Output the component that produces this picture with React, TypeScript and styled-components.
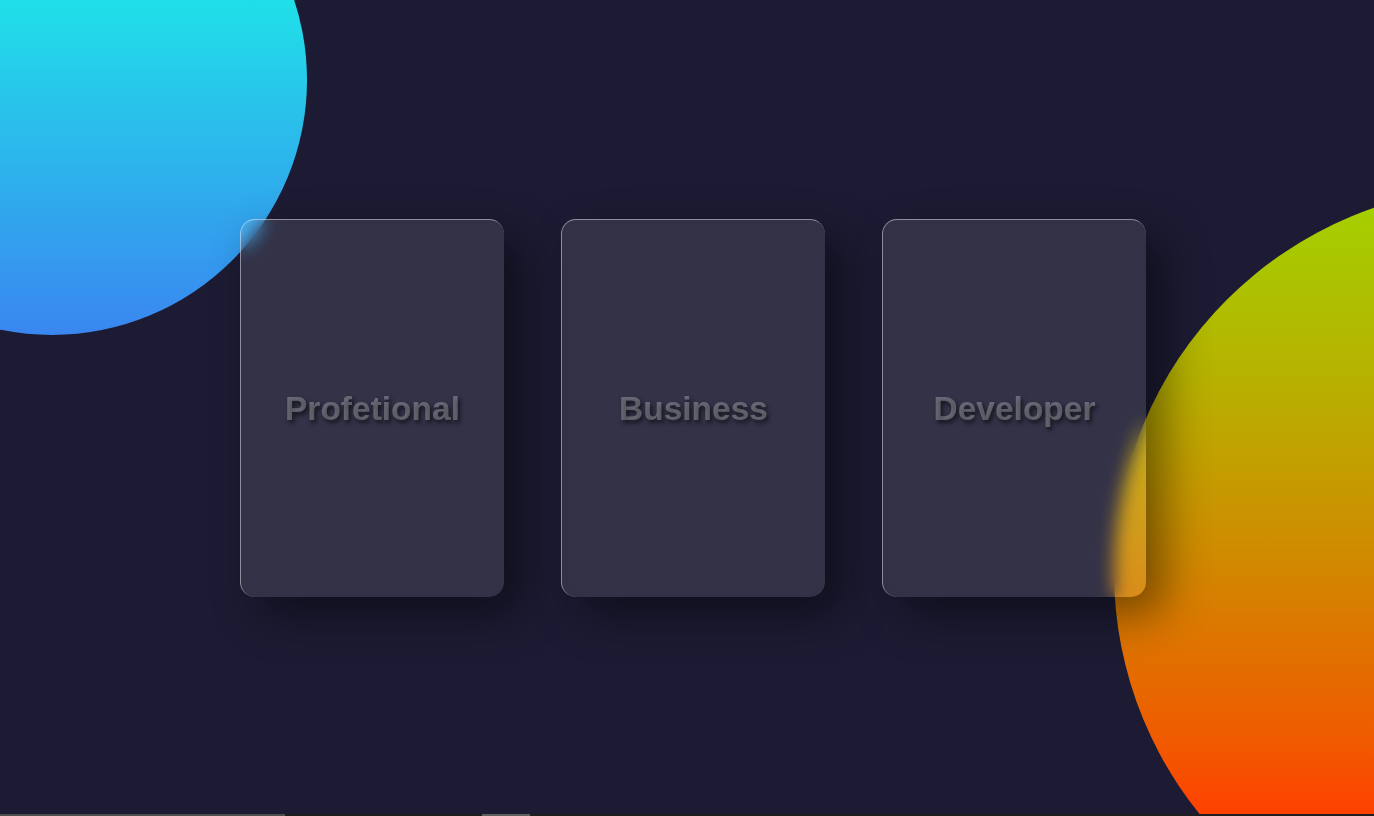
import React from "react";
import styled, { createGlobalStyle } from "styled-components";

const GlobalStyle = createGlobalStyle`
  * { box-sizing: border-box; }
  html, body { margin: 0; padding: 0; overflow: hidden; }
  body {
    background: #1c1b33;
    font-family: "Liberation Sans", Arial, sans-serif;
  }
`;

const Page = styled.div`
  height: 100vh;
  display: flex;
  flex-direction: column;
`;

const Stage = styled.main`
  position: relative;
  flex: 1;
  display: flex;
  align-items: center;
  justify-content: center;
  gap: 57px;
  padding-left: 12px;
  padding-top: 2px;
  overflow: hidden;
  background: #1c1b33;

  &::before {
    content: "";
    position: absolute;
    left: -203px;
    top: -175px;
    width: 510px;
    height: 510px;
    border-radius: 50%;
    background: linear-gradient(#12f6e6 0%, #20e0e8 34%, #3a86f0 100%);
  }

  &::after {
    content: "";
    position: absolute;
    left: 1114px;
    top: 187px;
    width: 770px;
    height: 770px;
    border-radius: 50%;
    background: linear-gradient(#a2d300 0%, #b7b100 25%, #d08a00 48%, #f05a00 72%, #ff3f00 82%, #ff3300 100%);
  }
`;

const Card = styled.div`
  position: relative;
  z-index: 1;
  width: 264px;
  height: 378px;
  border-radius: 15px;
  background: rgba(255, 255, 255, 0.1);
  border-top: 1px solid rgba(255, 255, 255, 0.45);
  border-left: 1px solid rgba(255, 255, 255, 0.45);
  box-shadow: 18px 18px 45px rgba(0, 0, 0, 0.45);
  backdrop-filter: blur(9px);
  -webkit-backdrop-filter: blur(9px);
  display: flex;
  align-items: center;
  justify-content: center;
`;

const Title = styled.h2`
  margin: 0;
  font-family: "Liberation Sans", Arial, sans-serif;
  font-weight: 700;
  font-size: 33.5px;
  color: rgba(255, 255, 255, 0.28);
  text-shadow: 2px 3px 4px rgba(0, 0, 0, 0.6);
`;

const ScrollStrip = styled.div`
  height: 2px;
  background: #1f1f1f;
  display: flex;
`;

const StripSegment = styled.div<{ $w: number; $ml: number; $c: string }>`
  height: 2px;
  width: ${(p) => p.$w}px;
  margin-left: ${(p) => p.$ml}px;
  background: ${(p) => p.$c};
`;

const cards = ["Profetional", "Business", "Developer"];

export default function App() {
  return (
    <Page>
      <GlobalStyle />
      <Stage>
        {cards.map((c) => (
          <Card key={c}>
            <Title>{c}</Title>
          </Card>
        ))}
      </Stage>
      <ScrollStrip>
        <StripSegment $w={285} $ml={0} $c="#4f4f4f" />
        <StripSegment $w={48} $ml={197} $c="#5f5f5f" />
      </ScrollStrip>
    </Page>
  );
}
